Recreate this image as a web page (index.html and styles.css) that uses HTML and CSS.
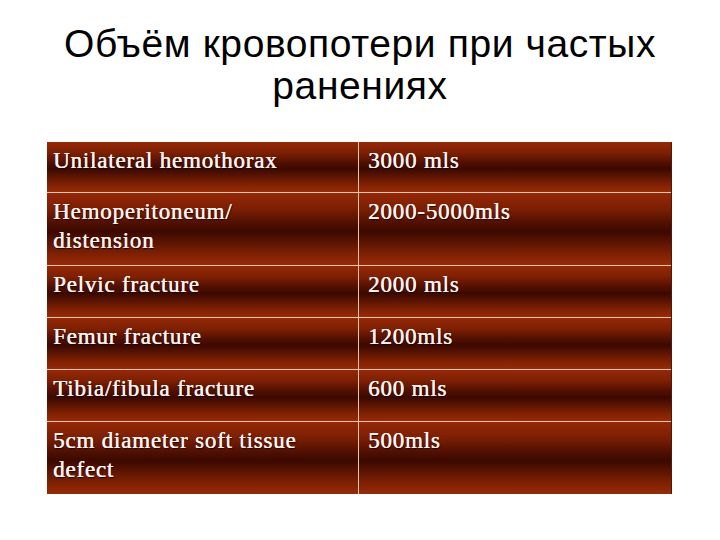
FILE: index.html
```html
<!DOCTYPE html>
<html lang="ru">
<head>
<meta charset="utf-8">
<title>Объём кровопотери</title>
<link rel="stylesheet" href="styles.css">
</head>
<body>
<div class="slide">
  <h1 class="title">Объём кровопотери при частых<br>ранениях</h1>
  <div class="table">
    <div class="cell c1 r1">Unilateral hemothorax</div>
    <div class="cell c2 r1">3000 mls</div>
    <div class="cell c1 r2">Hemoperitoneum/<br>distension</div>
    <div class="cell c2 r2">2000-5000mls</div>
    <div class="cell c1">Pelvic fracture</div>
    <div class="cell c2">2000 mls</div>
    <div class="cell c1">Femur fracture</div>
    <div class="cell c2">1200mls</div>
    <div class="cell c1">Tibia/fibula fracture</div>
    <div class="cell c2">600 mls</div>
    <div class="cell c1">5cm diameter soft tissue<br>defect</div>
    <div class="cell c2">500mls</div>
  </div>
</div>
</body>
</html>
```

FILE: styles.css
```css
html, body {
  margin: 0;
  padding: 0;
  background: #ffffff;
}
.slide {
  width: 720px;
  height: 540px;
  padding-top: 23px;
  box-sizing: border-box;
}
.title {
  margin: 0;
  font-family: "Liberation Sans", Arial, sans-serif;
  font-weight: normal;
  font-size: 39px;
  line-height: 42px;
  letter-spacing: 0.6px;
  text-align: center;
  color: #000;
}
.table {
  margin: 35px 0 0 47px;
  width: 624px;
  display: grid;
  grid-template-columns: 311px 312px;
  grid-template-rows: 50px 72px 51px 51px 51px 72px;
  column-gap: 1px;
  row-gap: 1px;
  background: #ecc2b2;
  box-shadow: 1px 0 0 #5a1505;
}
.cell {
  box-sizing: border-box;
  padding-top: 4px;
  font-family: "Liberation Serif", "Times New Roman", serif;
  font-size: 23px;
  line-height: 29px;
  letter-spacing: 0.8px;
  color: #fbf3f0;
  text-shadow: 0.4px 0 0 #fbf3f0, 1px 1px 1px #1a0400;
  background: linear-gradient(to bottom,
    #952807 0%,
    #7c1f03 22%,
    #4f0f01 42%,
    #3c0900 54%,
    #5a1402 68%,
    #7e2003 84%,
    #962b08 100%);
}
.c1 {
  padding-left: 6px;
}
.c2 {
  padding-left: 9px;
}
```
